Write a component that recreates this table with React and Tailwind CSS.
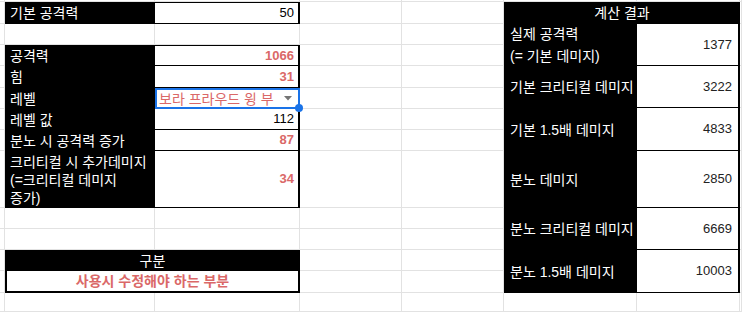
import React from "react";

const G = "border-r border-b border-[#e2e2e2]";
const KO = "text-[14px]";

function Empty({ w }) {
  return <div className={`${w} shrink-0 h-full ${G}`} />;
}

function Label({ children, className = "" }) {
  return (
    <div className={`w-[150px] shrink-0 h-full bg-black text-white flex items-center pl-[5px] whitespace-nowrap ${KO} ${className}`}>
      {children}
    </div>
  );
}

function Val({ children, className = "" }) {
  return (
    <div className={`w-[145px] shrink-0 h-full bg-white border-r-2 border-b border-black flex items-center justify-end pr-[4px] ${className}`}>
      {children}
    </div>
  );
}

function RLabel({ children, className = "" }) {
  return (
    <div className={`w-[133px] shrink-0 h-full bg-black text-white flex items-center pl-[6px] whitespace-nowrap ${KO} ${className}`}>
      {children}
    </div>
  );
}

function RVal({ children }) {
  return (
    <div className="w-[103px] shrink-0 h-full bg-white border-r-2 border-b border-black flex items-center justify-end pr-[6px] text-[#222]">
      {children}
    </div>
  );
}

const RED = "text-[#da6868] font-bold";

export default function App() {
  return (
    <div className="w-[742px] h-[312px] overflow-hidden bg-white flex text-[13px] leading-[16px] text-black font-['Liberation_Sans','Noto_Sans_CJK_KR',sans-serif]">
      {/* Left area */}
      <div className="w-[504px] shrink-0 flex flex-col">
        <div className="flex h-[2px]">
          <Empty w="w-[5px]" />
          <Empty w="w-[150px]" />
          <Empty w="w-[145px]" />
          <Empty w="w-[102px]" />
          <Empty w="w-[102px]" />
        </div>
        <div className="flex h-[22px]">
          <Empty w="w-[5px]" />
          <Label>기본 공격력</Label>
          <Val className="border-t">50</Val>
          <Empty w="w-[102px]" />
          <Empty w="w-[102px]" />
        </div>
        <div className="flex h-[21px]">
          <Empty w="w-[5px]" />
          <Empty w="w-[150px]" />
          <Empty w="w-[145px]" />
          <Empty w="w-[102px]" />
          <Empty w="w-[102px]" />
        </div>
        <div className="flex h-[21px]">
          <Empty w="w-[5px]" />
          <Label>공격력</Label>
          <Val className={`border-t ${RED}`}>1066</Val>
          <Empty w="w-[102px]" />
          <Empty w="w-[102px]" />
        </div>
        <div className="flex h-[22px]">
          <Empty w="w-[5px]" />
          <Label>힘</Label>
          <Val className={RED}>31</Val>
          <Empty w="w-[102px]" />
          <Empty w="w-[102px]" />
        </div>
        <div className="flex h-[21px]">
          <Empty w="w-[5px]" />
          <Label>레벨</Label>
          <div className="relative z-10 w-[145px] shrink-0 h-full bg-white border-2 border-[#1a73e8] flex items-center">
            <div className={`flex-1 whitespace-nowrap pl-[2px] text-[#da6868] ${KO}`}>
              보라 프라우드 윙 부
            </div>
            <svg width="8" height="5" viewBox="0 0 8 5" className="ml-[3px] mr-[6px] shrink-0">
              <path d="M0 0 L8 0 L4 4.5 Z" fill="#757575" />
            </svg>
            <div className="absolute -right-[5px] -bottom-[5px] w-[8px] h-[8px] rounded-full bg-[#1a73e8]" />
          </div>
          <Empty w="w-[102px]" />
          <Empty w="w-[102px]" />
        </div>
        <div className="flex h-[21px]">
          <Empty w="w-[5px]" />
          <Label>레벨 값</Label>
          <Val>112</Val>
          <Empty w="w-[102px]" />
          <Empty w="w-[102px]" />
        </div>
        <div className="flex h-[21px]">
          <Empty w="w-[5px]" />
          <Label>분노 시 공격력 증가</Label>
          <Val className={RED}>87</Val>
          <Empty w="w-[102px]" />
          <Empty w="w-[102px]" />
        </div>
        <div className="flex h-[57px]">
          <Empty w="w-[5px]" />
          <Label className="leading-[18px]">
            <div>
              크리티컬 시 추가데미지
              <br />
              (=크리티컬 데미지
              <br />
              증가)
            </div>
          </Label>
          <Val className={RED}>34</Val>
          <Empty w="w-[102px]" />
          <Empty w="w-[102px]" />
        </div>
        <div className="flex h-[21px]">
          <Empty w="w-[5px]" />
          <Empty w="w-[150px]" />
          <Empty w="w-[145px]" />
          <Empty w="w-[102px]" />
          <Empty w="w-[102px]" />
        </div>
        <div className="flex h-[21px]">
          <Empty w="w-[5px]" />
          <Empty w="w-[150px]" />
          <Empty w="w-[145px]" />
          <Empty w="w-[102px]" />
          <Empty w="w-[102px]" />
        </div>
        <div className="flex h-[21px]">
          <Empty w="w-[5px]" />
          <div className={`w-[295px] shrink-0 h-full bg-black text-white flex items-center justify-center ${KO}`}>
            구분
          </div>
          <Empty w="w-[102px]" />
          <Empty w="w-[102px]" />
        </div>
        <div className="flex h-[22px]">
          <Empty w="w-[5px]" />
          <div className={`w-[295px] shrink-0 h-full bg-white border-2 border-t-0 border-black flex items-center justify-center ${RED} ${KO}`}>
            사용시 수정해야 하는 부분
          </div>
          <Empty w="w-[102px]" />
          <Empty w="w-[102px]" />
        </div>
        <div className="flex h-[19px]">
          <Empty w="w-[5px]" />
          <Empty w="w-[150px]" />
          <Empty w="w-[145px]" />
          <Empty w="w-[102px]" />
          <Empty w="w-[102px]" />
        </div>
      </div>

      {/* Right area */}
      <div className="w-[238px] shrink-0 flex flex-col">
        <div className="flex h-[2px]">
          <Empty w="w-[133px]" />
          <Empty w="w-[103px]" />
          <Empty w="w-[2px]" />
        </div>
        <div className="flex h-[22px]">
          <div className={`w-[236px] shrink-0 h-full bg-black text-white flex items-center justify-center ${KO}`}>
            계산 결과
          </div>
          <Empty w="w-[2px]" />
        </div>
        <div className="flex h-[42px]">
          <RLabel className="leading-[22px]">
            <div>
              실제 공격력
              <br />
              (= 기본 데미지)
            </div>
          </RLabel>
          <RVal>1377</RVal>
          <Empty w="w-[2px]" />
        </div>
        <div className="flex h-[42px]">
          <RLabel>기본 크리티컬 데미지</RLabel>
          <RVal>3222</RVal>
          <Empty w="w-[2px]" />
        </div>
        <div className="flex h-[43px]">
          <RLabel>기본 1.5배 데미지</RLabel>
          <RVal>4833</RVal>
          <Empty w="w-[2px]" />
        </div>
        <div className="flex h-[57px]">
          <RLabel>분노 데미지</RLabel>
          <RVal>2850</RVal>
          <Empty w="w-[2px]" />
        </div>
        <div className="flex h-[42px]">
          <RLabel>분노 크리티컬 데미지</RLabel>
          <RVal>6669</RVal>
          <Empty w="w-[2px]" />
        </div>
        <div className="flex h-[43px]">
          <RLabel>분노 1.5배 데미지</RLabel>
          <RVal>10003</RVal>
          <Empty w="w-[2px]" />
        </div>
        <div className="flex h-[19px]">
          <Empty w="w-[133px]" />
          <Empty w="w-[103px]" />
          <Empty w="w-[2px]" />
        </div>
      </div>
    </div>
  );
}
